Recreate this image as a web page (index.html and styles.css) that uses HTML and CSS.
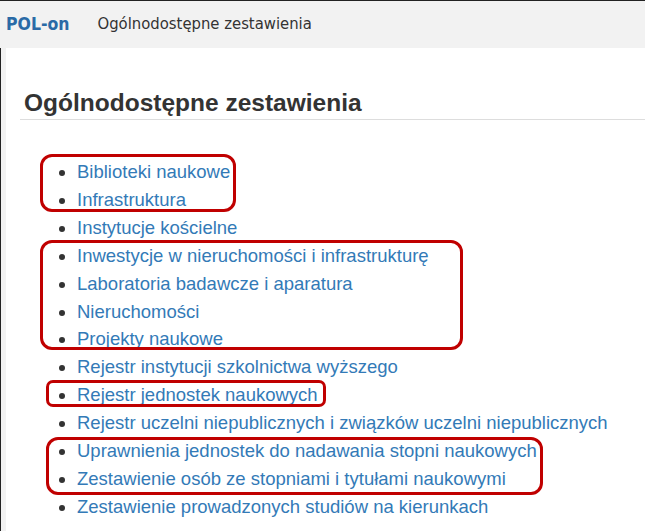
FILE: index.html
```html
<!DOCTYPE html>
<html>
<head>
<meta charset="utf-8">
<title>Ogólnodostępne zestawienia</title>
<link rel="stylesheet" href="styles.css">
</head>
<body>
    <div id="topbar">
        <a href="javascript:;" class="brand">POL-on</a>
        <a href="javascript:;" class="crumb">Ogólnodostępne zestawienia</a>
    </div>

    <div id="page">
        <div id="main">
            <h2 class="title">Ogólnodostępne zestawienia</h2>

            <div class="list-wrap">
                <ul class="reports">
                    <li><a href="javascript:;">Biblioteki naukowe</a></li>
                    <li><a href="javascript:;">Infrastruktura</a></li>
                    <li><a href="javascript:;">Instytucje kościelne</a></li>
                    <li><a href="javascript:;">Inwestycje w nieruchomości i infrastrukturę</a></li>
                    <li><a href="javascript:;">Laboratoria badawcze i aparatura</a></li>
                    <li><a href="javascript:;">Nieruchomości</a></li>
                    <li><a href="javascript:;">Projekty naukowe</a></li>
                    <li><a href="javascript:;">Rejestr instytucji szkolnictwa wyższego</a></li>
                    <li><a href="javascript:;">Rejestr jednostek naukowych</a></li>
                    <li><a href="javascript:;">Rejestr uczelni niepublicznych i związków uczelni niepublicznych</a></li>
                    <li><a href="javascript:;">Uprawnienia jednostek do nadawania stopni naukowych</a></li>
                    <li><a href="javascript:;">Zestawienie osób ze stopniami i tytułami naukowymi</a></li>
                    <li><a href="javascript:;">Zestawienie prowadzonych studiów na kierunkach</a></li>
                </ul>

                <!-- red frames drawn over the list -->
                <div class="mark" style="left:16px;top:-4px;width:196px;height:58px;"></div>
                <div class="mark" style="left:16px;top:82px;width:423px;height:110px;"></div>
                <div class="mark small" style="left:22px;top:222px;width:280px;height:27px;"></div>
                <div class="mark" style="left:22px;top:279px;width:497px;height:58px;"></div>
            </div>
        </div>
    </div>
</body>
</html>
```

FILE: styles.css
```css
* {
    margin: 0;
    padding: 0;
}

body {
    background: #f2f2f2;
    font-family: "Liberation Sans", Arial, sans-serif;
    border-top: 1px solid #222;
    overflow: hidden;
}

#topbar {
    height: 47px;
    display: flex;
    align-items: center;
    padding-left: 6px;
    background: #f2f2f2;
}

#topbar a {
    text-decoration: none;
}

.brand {
    font-family: "DejaVu Sans Condensed", "DejaVu Sans", sans-serif;
    font-weight: bold;
    font-size: 17.5px;
    color: #2a6aa6;
    margin-right: 28px;
    position: relative;
    top: -1px;
}

.crumb {
    font-family: "DejaVu Sans Condensed", "DejaVu Sans", sans-serif;
    font-size: 16.5px;
    color: #333;
    position: relative;
    top: -1px;
}

#page {
    border-left: 1px solid #222;
    padding-left: 5px;
    height: 500px;
}

#main {
    background: #fff;
    height: 100%;
    padding-left: 18px;
}

.title {
    font-size: 24.5px;
    font-weight: bold;
    line-height: 28px;
    color: #333;
    padding-top: 41px;
    padding-bottom: 2px;
    border-bottom: 1px solid #ddd;
    margin-left: -4px;
    padding-left: 4px;
}

.list-wrap {
    position: relative;
    margin-top: 38px;
}

.reports {
    padding-left: 53px;
    font-size: 18.5px;
    line-height: 27.9px;
    color: #333;
}

.reports a {
    color: #337ab7;
    text-decoration: none;
}

.mark {
    position: absolute;
    border: 3px solid #c00000;
    border-radius: 12px;
    box-sizing: border-box;
}

.mark.small {
    border-radius: 7px;
}
```
